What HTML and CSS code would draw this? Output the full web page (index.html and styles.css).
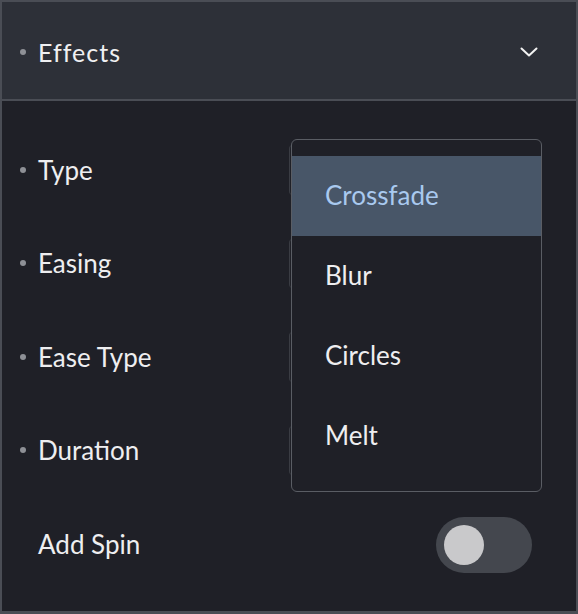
FILE: index.html
```html
<!DOCTYPE html>
<html>
<head>
<meta charset="utf-8">
<link rel="stylesheet" href="styles.css">
</head>
<body>
<div class="panel">
  <div class="header">
    <span class="dot"></span>
    <span class="title">Effects</span>
    <svg class="chevron" width="18" height="10" viewBox="0 0 18 10"><path d="M1.5 1.5 L9 8.5 L16.5 1.5" fill="none" stroke="#f2f2f2" stroke-width="2" stroke-linecap="round" stroke-linejoin="round"/></svg>
  </div>
  <div class="body">
    <div class="row"><span class="dot"></span><span class="label">Type</span><span class="field"></span></div>
    <div class="row"><span class="dot"></span><span class="label">Easing</span><span class="field"></span></div>
    <div class="row"><span class="dot"></span><span class="label">Ease Type</span><span class="field"></span></div>
    <div class="row"><span class="dot"></span><span class="label">Duration</span><span class="field"></span></div>
    <div class="row"><span class="dot hidden"></span><span class="label">Add Spin</span>
      <span class="toggle"><span class="knob"></span></span>
    </div>
    <div class="menu">
      <div class="item active">Crossfade</div>
      <div class="item">Blur</div>
      <div class="item">Circles</div>
      <div class="item">Melt</div>
    </div>
  </div>
</div>
</body>
</html>
```
FILE: styles.css
```css
* { box-sizing: border-box; }
html, body { margin: 0; padding: 0; background: #1f2027; }
body { font-family: Lato, "Open Sans", sans-serif; }
.panel {
  width: 578px;
  height: 614px;
  border: 2px solid #4a4d55;
  border-bottom-width: 3px;
  background: #1f2027;
  display: flex;
  flex-direction: column;
}
.header {
  height: 99px;
  flex: none;
  background: #2d3038;
  border-bottom: 2px solid #4a4d55;
  display: flex;
  align-items: center;
  padding: 3px 38px 0 18px;
}
.dot {
  width: 6px;
  height: 6px;
  border-radius: 50%;
  background: #8e9096;
  flex: none;
  margin-right: 12px;
}
.dot.hidden { visibility: hidden; }
.title {
  color: #f0f0f2;
  font-size: 25px;
  letter-spacing: 1px;
  flex: 1;
}
.chevron { flex: none; }
.body {
  position: relative;
  flex: 1;
  padding: 22px 44px 0 18px;
  display: flex;
  flex-direction: column;
}
.row {
  height: 93.5px;
  display: flex;
  align-items: center;
  position: relative;
}
.label {
  color: #eeeef0;
  font-size: 26px;
  flex: 1;
}
.field {
  position: absolute;
  left: 269px;
  top: 22px;
  bottom: 22px;
  width: 4px;
  border-left: 1.5px solid #3a3c43;
  border-radius: 5px 0 0 5px;
}
.toggle {
  width: 96px;
  height: 56px;
  border-radius: 28px;
  background: #44474e;
  flex: none;
  display: flex;
  align-items: center;
  padding-left: 8px;
  margin-top: 3px;
}
.knob {
  width: 40px;
  height: 40px;
  border-radius: 50%;
  background: #c9c9cb;
}
.menu {
  position: absolute;
  left: 289px;
  top: 38px;
  width: 251px;
  height: 353px;
  border: 1.5px solid #5a5d64;
  border-radius: 6px;
  background: #1f2027;
  padding: 16px 0 0 0;
}
.item {
  height: 80px;
  display: flex;
  align-items: center;
  padding-left: 33px;
  padding-bottom: 3px;
  color: #eeeef0;
  font-size: 26px;
}
.item.active {
  background: #485668;
  color: #a9c9ef;
}
```
